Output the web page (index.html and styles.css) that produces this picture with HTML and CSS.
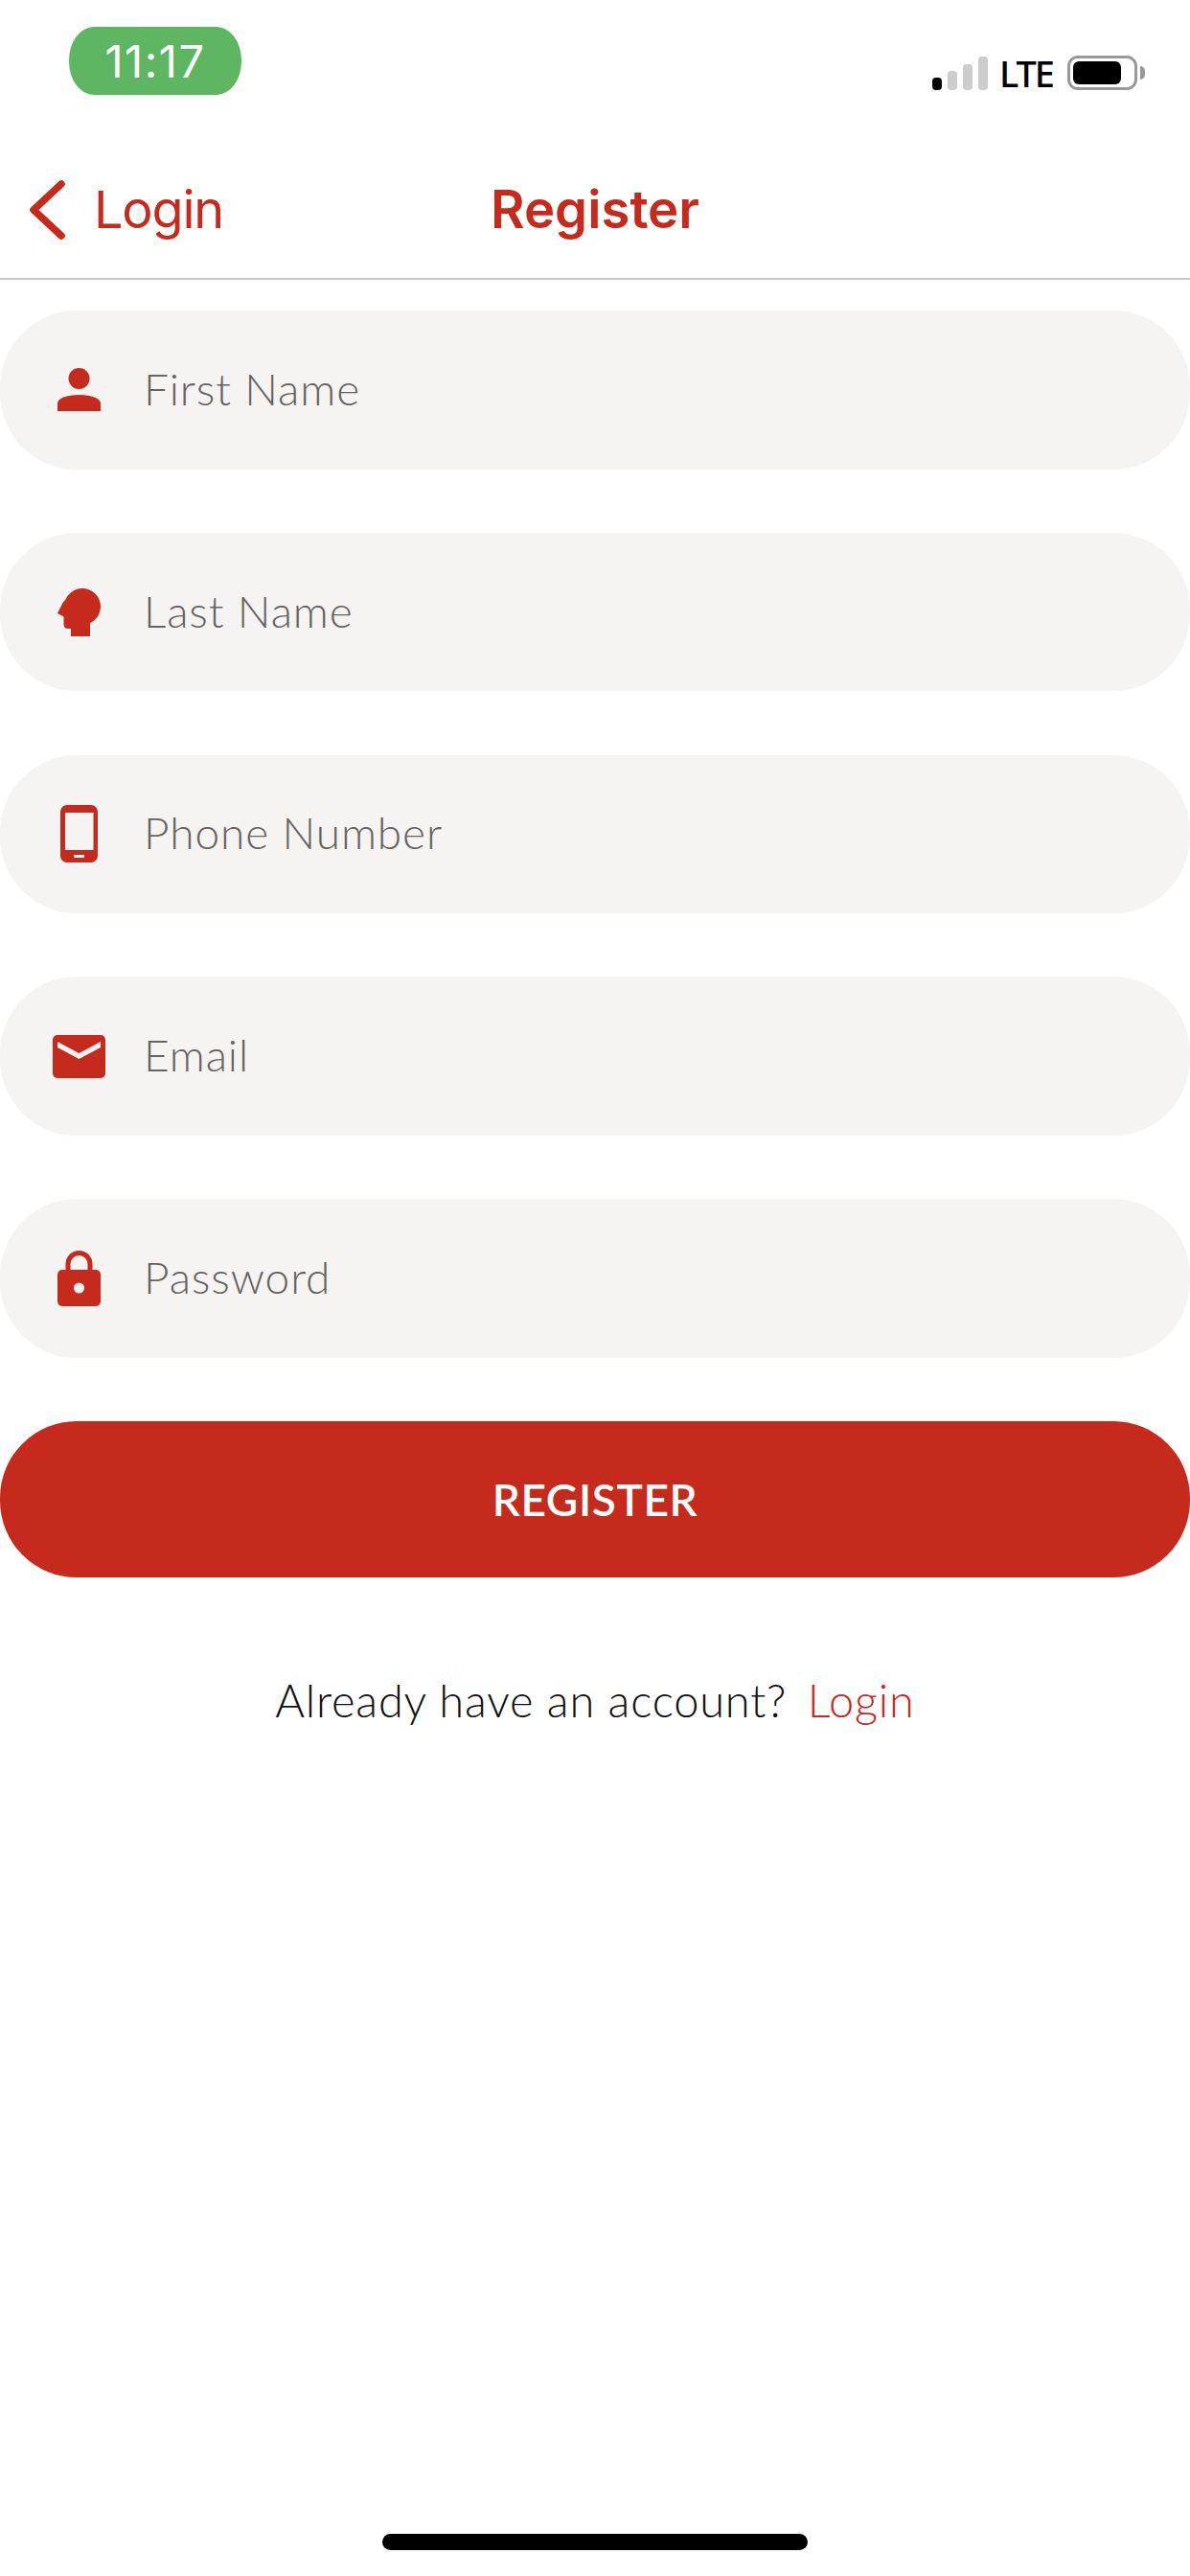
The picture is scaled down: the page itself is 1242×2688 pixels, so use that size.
FILE: index.html
```html
<!DOCTYPE html>
<html lang="en">
<head>
    <meta charset="UTF-8">
    <meta name="viewport" content="width=device-width, initial-scale=1.0">
    <title>Register</title>
    <link rel="stylesheet" href="styles.css">
</head>
<body>
    <!-- Status bar -->
    <div class="status-bar">
        <div class="time">11:17</div>
        <div class="status-right">
            <div class="signal">
                <span class="bar bar-on bar-1"></span>
                <span class="bar bar-2"></span>
                <span class="bar bar-3"></span>
                <span class="bar bar-4"></span>
            </div>
            <span class="network">LTE</span>
            <div class="battery"><span class="battery-level"></span></div>
            <span class="battery-nub"></span>
        </div>
    </div>

    <!-- Navigation -->
    <div class="nav">
        <a class="nav-back" href="#">
            <svg class="chevron" width="37" height="62" viewBox="0 0 37 62">
                <polyline points="33,4 4,31 33,58" fill="none" stroke="#c62a1c" stroke-width="7.5" stroke-linecap="round" stroke-linejoin="round"/>
            </svg>
            <span>Login</span>
        </a>
        <div class="nav-title">Register</div>
    </div>

    <!-- Form -->
    <div class="form">
        <div class="field">
            <div class="field-icon">
                <svg width="45" height="45" viewBox="0 0 45 45">
                    <circle class="icon-fill" cx="22.5" cy="11" r="11"/>
                    <path class="icon-fill" d="M0 45V37C0 31.5 10 28 22.5 28S45 31.5 45 37V45Z"/>
                </svg>
            </div>
            <span class="placeholder">First Name</span>
        </div>
        <div class="field">
            <div class="field-icon">
                <svg width="45" height="50" viewBox="0 0 45 50">
                    <path class="icon-fill" d="M8.5 11.5A19 19 0 1 1 34 36.2V50H14V42H11Q6.5 42 6.5 37V29.5L0 26L5.5 15Z"/>
                </svg>
            </div>
            <span class="placeholder">Last Name</span>
        </div>
        <div class="field">
            <div class="field-icon">
                <svg width="39" height="60" viewBox="0 0 39 60">
                    <rect class="icon-fill" width="39" height="60" rx="7"/>
                    <rect class="icon-cut" x="5" y="8" width="29.5" height="39"/>
                    <rect class="icon-cut" x="14" y="52" width="11" height="3"/>
                </svg>
            </div>
            <span class="placeholder">Phone Number</span>
        </div>
        <div class="field">
            <div class="field-icon">
                <svg width="55" height="45" viewBox="0 0 55 45">
                    <rect class="icon-fill" width="55" height="45" rx="5"/>
                    <path class="icon-cut" d="M5 7L27.5 19L50 7V13L27.5 25L5 13Z"/>
                </svg>
            </div>
            <span class="placeholder">Email</span>
        </div>
        <div class="field">
            <div class="field-icon">
                <svg width="45" height="58" viewBox="0 0 45 58">
                    <path d="M11 21V14A11.5 11.5 0 0 1 34 14V21" fill="none" stroke="#c62a1c" stroke-width="5"/>
                    <rect class="icon-fill" y="20" width="45" height="38" rx="5"/>
                    <circle class="icon-cut" cx="22.5" cy="39" r="5.5"/>
                </svg>
            </div>
            <span class="placeholder">Password</span>
        </div>
        <button class="register-btn">REGISTER</button>
    </div>

    <p class="login-line">Already have an account? <a href="#">Login</a></p>

    <div class="home-indicator"></div>
</body>
</html>
```

FILE: styles.css
```css
* {
    box-sizing: border-box;
}
body {
    margin: 0;
    width: 1242px;
    height: 2688px;
    background-color: #fff;
    font-family: Lato, "Open Sans", sans-serif;
    display: flex;
    flex-direction: column;
    overflow: hidden;
}

/* Status bar */
.status-bar {
    height: 144px;
    padding: 28px 47px 0 72px;
    display: flex;
    justify-content: space-between;
    align-items: flex-start;
}
.time {
    width: 180px;
    height: 71px;
    border-radius: 26px / 35px;
    background-color: #5eb663;
    color: #fff;
    font-family: Inter, sans-serif;
    font-size: 47px;
    letter-spacing: 1.5px;
    line-height: 71px;
    text-align: center;
}
.status-right {
    margin-top: 30px;
    height: 36px;
    display: flex;
    align-items: center;
}
.signal {
    height: 35px;
    display: flex;
    align-items: flex-end;
    gap: 6px;
}
.bar {
    width: 10px;
    border-radius: 4px;
    background-color: #ccc;
}
.bar-on {
    background-color: #000;
}
.bar-1 {
    height: 13px;
}
.bar-2 {
    height: 20px;
}
.bar-3 {
    height: 27px;
}
.bar-4 {
    height: 35px;
}
.network {
    margin-left: 12px;
    font-family: "Noto Sans", sans-serif;
    font-weight: 500;
    font-size: 38px;
    letter-spacing: -2px;
    line-height: 36px;
    color: #000;
}
.battery {
    margin-left: 15px;
    width: 73px;
    height: 36px;
    padding: 3px 0 0 3px;
    border: 3px solid #999;
    border-radius: 11px;
}
.battery-level {
    display: block;
    width: 50px;
    height: 24px;
    border-radius: 6px;
    background-color: #000;
}
.battery-nub {
    margin-left: 3px;
    width: 5px;
    height: 14px;
    border-radius: 0 7px 7px 0;
    background-color: #999;
}

/* Navigation */
.nav {
    position: relative;
    height: 148px;
    border-bottom: 2px solid #cbcbcb;
    display: flex;
    align-items: center;
    justify-content: center;
    font-family: Inter, sans-serif;
    font-size: 54px;
    color: #c62a1c;
}
.nav-back {
    position: absolute;
    left: 31px;
    top: 42px;
    display: flex;
    align-items: center;
    gap: 30px;
    letter-spacing: -1.2px;
    color: #c62a1c;
    text-decoration: none;
}
.nav-title {
    padding-top: 2px;
    font-size: 54.5px;
    font-weight: 600;
}

/* Form */
.form {
    margin-top: 32px;
    display: flex;
    flex-direction: column;
    gap: 66.2px;
}
.field {
    height: 165.6px;
    padding-left: 55px;
    border-radius: 80px;
    background-color: #f5f4f3;
    display: flex;
    align-items: center;
}
.field-icon {
    width: 55px;
    margin-right: 40px;
    display: flex;
    justify-content: center;
}
.field-icon svg {
    display: block;
}
.icon-fill {
    fill: #c62a1c;
}
.icon-cut {
    fill: #f5f4f3;
}
.placeholder {
    padding-bottom: 3px;
    font-size: 46px;
    font-weight: 300;
    letter-spacing: 0.9px;
    color: #666462;
}
.register-btn {
    height: 163px;
    border: none;
    border-radius: 80px;
    background-color: #c62a1c;
    color: #fff;
    font-family: inherit;
    font-size: 46px;
    font-weight: 600;
    letter-spacing: 0.6px;
}

/* Footer line */
.login-line {
    margin: 100px 0 0;
    text-align: center;
    font-size: 47px;
    font-weight: 300;
    letter-spacing: 0.8px;
    color: #111;
}
.login-line a {
    margin-left: 8px;
    color: #c62a1c;
    text-decoration: none;
}
.home-indicator {
    margin: auto auto 27px;
    width: 444px;
    height: 17px;
    border-radius: 9px;
    background-color: #000;
}
```
